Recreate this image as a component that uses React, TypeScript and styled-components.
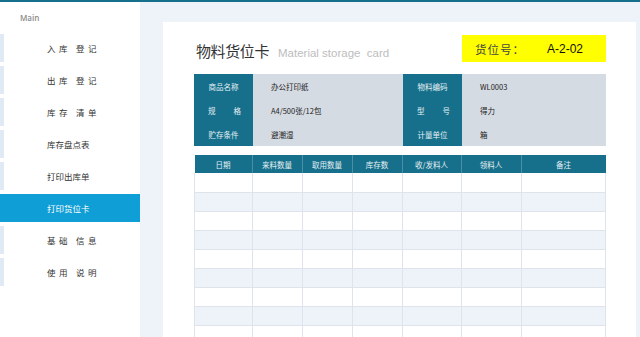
import * as React from "react";
import styled, { createGlobalStyle } from "styled-components";

const teal = "#16708c";
const pageBg = "#eef2f9";

const GlobalStyle = createGlobalStyle`
  html, body {
    margin: 0;
    padding: 0;
    background: ${pageBg};
    font-family: "Noto Sans CJK SC", "Liberation Sans", sans-serif;
  }
`;

const Page = styled.div`
  display: flex;
  flex-direction: column;
  height: 337px;
  overflow: hidden;
`;

const TopBar = styled.div`
  flex: 0 0 2px;
  background: ${teal};
`;

const Body = styled.div`
  display: flex;
  flex: 1;
  min-height: 0;
`;

const Sidebar = styled.nav`
  flex: 0 0 140px;
  background: #fff;
  padding-top: 11px;
`;

const SectionLabel = styled.div`
  font-family: "Open Sans", "Liberation Sans", sans-serif;
  font-size: 8px;
  font-weight: 600;
  color: #8a8a8a;
  padding-left: 20px;
  height: 10px;
  line-height: 10px;
  margin-bottom: 11px;
`;

const MenuItem = styled.div<{ $active?: boolean; $spaced?: boolean }>`
  display: flex;
  align-items: center;
  height: 28px;
  margin-bottom: 4px;
  padding-left: 47px;
  font-size: 8.5px;
  letter-spacing: ${(p) => (p.$spaced ? "3.4px" : "0")};
  white-space: pre;
  color: ${(p) => (p.$active ? "#fff" : "#333")};
  background: ${(p) => (p.$active ? "#0f9ed5" : "#fff")};
  box-shadow: ${(p) => (p.$active ? "none" : "inset 4px 0 0 #e0eaf5")};
`;

const Main = styled.main`
  flex: 1;
  background: ${pageBg};
  padding: 20px 4px 0 23px;
  min-width: 0;
`;

const Card = styled.section`
  background: #fff;
  height: 100%;
  padding: 13px 30px 0 31px;
  box-sizing: border-box;
`;

const Header = styled.div`
  display: flex;
  align-items: flex-end;
  justify-content: space-between;
  height: 27px;
`;

const Title = styled.div`
  display: flex;
  align-items: baseline;
  gap: 9px;
  padding-bottom: 1px;
  padding-left: 2px;
`;

const TitleMain = styled.span`
  font-size: 15px;
  color: #333;
  letter-spacing: -0.4px;
`;

const TitleSub = styled.span`
  font-family: "Liberation Sans", sans-serif;
  font-size: 11.5px;
  color: #bdbdbd;
  white-space: pre;
`;

const SlotBox = styled.div`
  align-self: stretch;
  width: 144px;
  background: #ffff00;
  display: flex;
  align-items: center;
  padding-left: 13px;
  box-sizing: border-box;
`;

const SlotLabel = styled.span`
  font-size: 11.5px;
  color: #444;
  letter-spacing: 1px;
  width: 72px;
`;

const SlotValue = styled.span`
  font-family: "Liberation Sans", sans-serif;
  font-size: 12px;
  color: #111;
`;

const InfoGrid = styled.div`
  margin-top: 12px;
  display: grid;
  grid-template-columns: 59px 150px 59px 1fr;
  grid-auto-rows: 24px;
`;

const InfoLabel = styled.div<{ $spread?: boolean }>`
  background: ${teal};
  color: #e6f0f4;
  font-size: 7.5px;
  display: flex;
  align-items: center;
  justify-content: ${(p) => (p.$spread ? "space-between" : "center")};
  padding: ${(p) => (p.$spread ? "0 12px 0 14px" : "0")};
`;

const InfoValue = styled.div`
  background: #d5dbe3;
  color: #222;
  font-size: 7.5px;
  display: flex;
  align-items: center;
  padding-left: 18px;
`;

const Sheet = styled.table`
  margin-top: 9px;
  width: 412px;
  border-collapse: collapse;
  table-layout: fixed;
`;

const HeadCell = styled.th<{ $w?: number }>`
  width: ${(p) => (p.$w ? `${p.$w}px` : "auto")};
  height: 18px;
  padding: 0;
  background: ${teal};
  color: #e6f0f4;
  font-size: 7.5px;
  font-weight: 400;
  border-left: 1px solid #4c8ea3;
  &:first-child {
    border-left: none;
  }
`;

const Row = styled.tr<{ $shade: boolean }>`
  height: 19px;
  background: ${(p) => (p.$shade ? pageBg : "#fff")};
`;

const Cell = styled.td`
  padding: 0;
  border: 1px solid #dfe4ec;
  border-top: none;
`;

const menu = [
  { label: "入库 登记", spaced: true },
  { label: "出库 登记", spaced: true },
  { label: "库存 清单", spaced: true },
  { label: "库存盘点表" },
  { label: "打印出库单" },
  { label: "打印货位卡", active: true },
  { label: "基础 信息", spaced: true },
  { label: "使用 说明", spaced: true },
];

const columns: [string, number | undefined][] = [
  ["日期", 57],
  ["来料数量", 49],
  ["取用数量", 49],
  ["库存数", 49],
  ["收/发料人", 58],
  ["领料人", 59],
  ["备注", undefined],
];

export default function App() {
  return (
    <Page>
      <GlobalStyle />
      <TopBar />
      <Body>
        <Sidebar>
          <SectionLabel>Main</SectionLabel>
          {menu.map((m) => (
            <MenuItem key={m.label} $active={m.active} $spaced={m.spaced}>
              {m.label}
            </MenuItem>
          ))}
        </Sidebar>

        <Main>
          <Card>
            <Header>
              <Title>
                <TitleMain>物料货位卡</TitleMain>
                <TitleSub>Material storage  card</TitleSub>
              </Title>
              <SlotBox>
                <SlotLabel>货位号：</SlotLabel>
                <SlotValue>A-2-02</SlotValue>
              </SlotBox>
            </Header>

            <InfoGrid>
              <InfoLabel>商品名称</InfoLabel>
              <InfoValue>办公打印纸</InfoValue>
              <InfoLabel>物料编码</InfoLabel>
              <InfoValue>WL0003</InfoValue>

              <InfoLabel $spread>
                <span>规</span>
                <span>格</span>
              </InfoLabel>
              <InfoValue>A4/500张/12包</InfoValue>
              <InfoLabel $spread>
                <span>型</span>
                <span>号</span>
              </InfoLabel>
              <InfoValue>得力</InfoValue>

              <InfoLabel>贮存条件</InfoLabel>
              <InfoValue>避潮湿</InfoValue>
              <InfoLabel>计量单位</InfoLabel>
              <InfoValue>箱</InfoValue>
            </InfoGrid>

            <Sheet>
              <thead>
                <tr>
                  {columns.map(([name, w]) => (
                    <HeadCell key={name} $w={w}>
                      {name}
                    </HeadCell>
                  ))}
                </tr>
              </thead>
              <tbody>
                {Array.from({ length: 10 }).map((_, i) => (
                  <Row key={i} $shade={i % 2 === 1}>
                    {columns.map(([name]) => (
                      <Cell key={name} />
                    ))}
                  </Row>
                ))}
              </tbody>
            </Sheet>
          </Card>
        </Main>
      </Body>
    </Page>
  );
}
